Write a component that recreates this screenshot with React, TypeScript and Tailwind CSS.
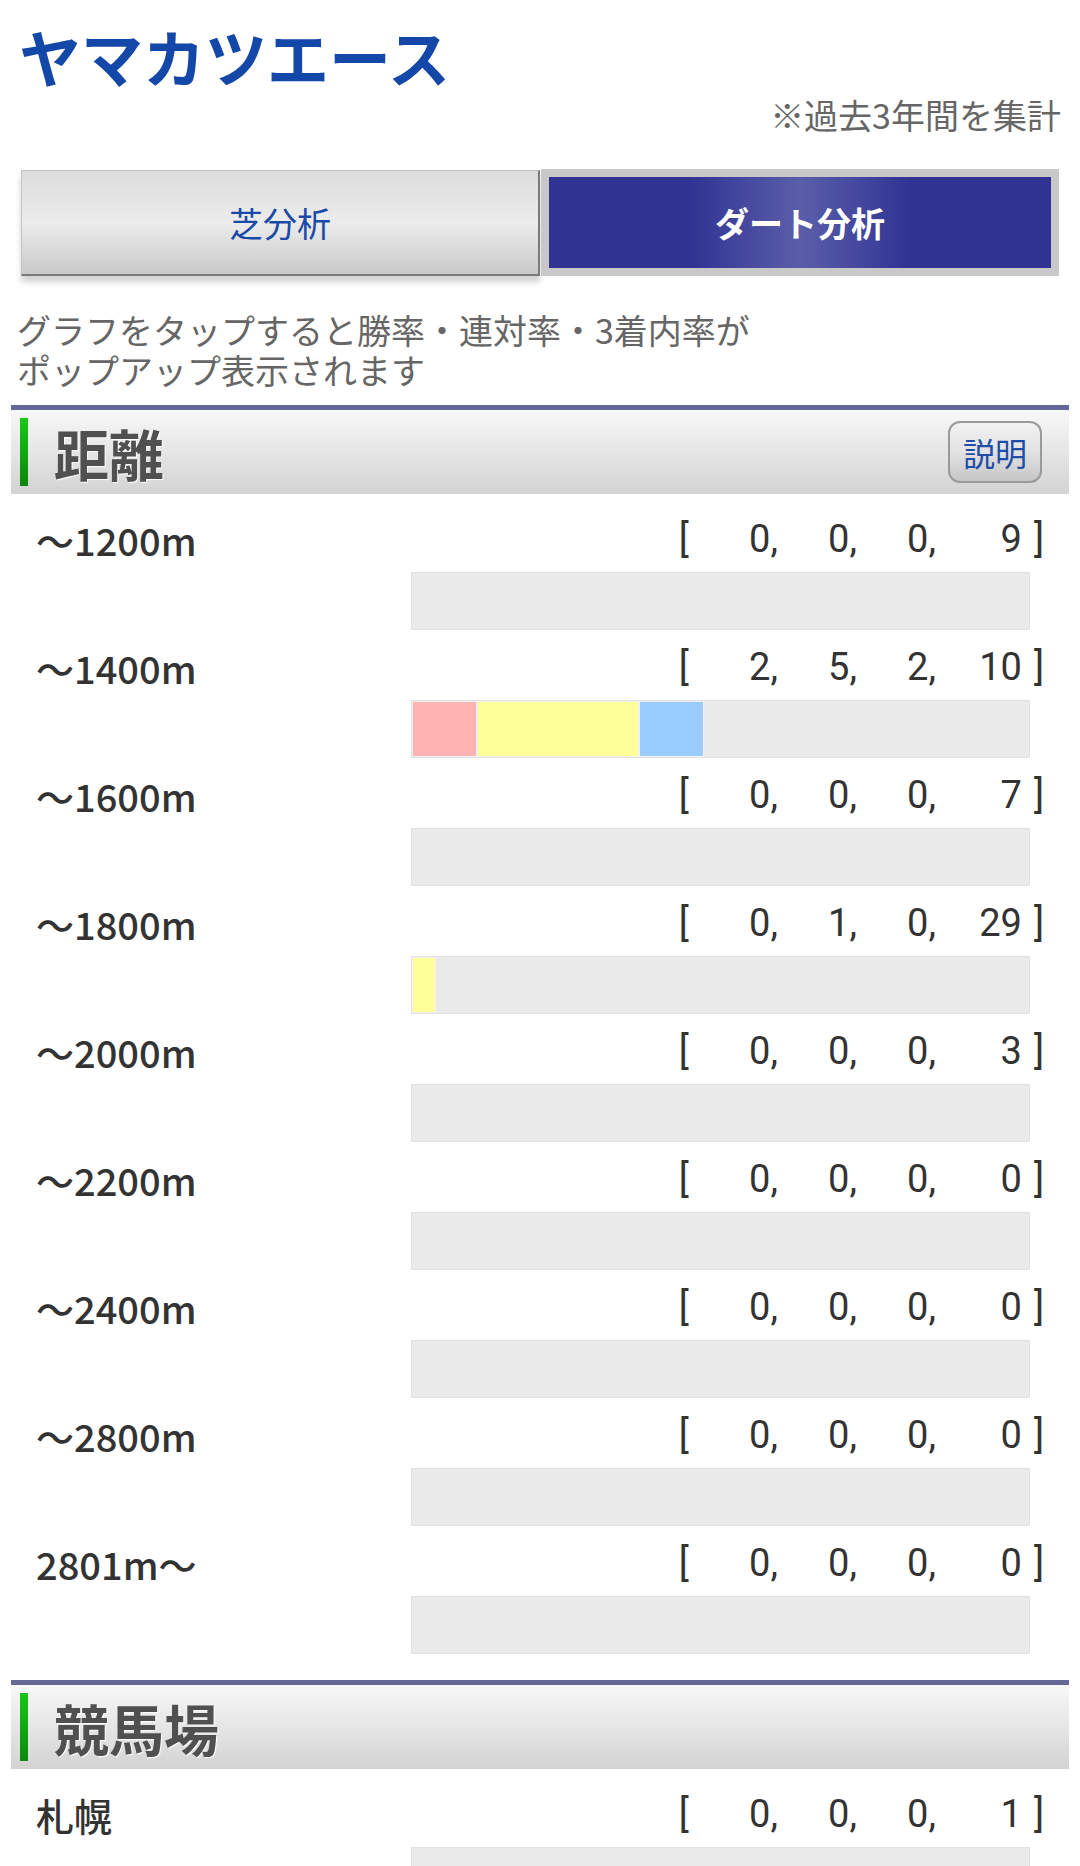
import React from 'react';

type Row = { label: string; counts: number[] };

const distanceRows: Row[] = [
    { label: '～1200m', counts: [0, 0, 0, 9] },
    { label: '～1400m', counts: [2, 5, 2, 10] },
    { label: '～1600m', counts: [0, 0, 0, 7] },
    { label: '～1800m', counts: [0, 1, 0, 29] },
    { label: '～2000m', counts: [0, 0, 0, 3] },
    { label: '～2200m', counts: [0, 0, 0, 0] },
    { label: '～2400m', counts: [0, 0, 0, 0] },
    { label: '～2800m', counts: [0, 0, 0, 0] },
    { label: '2801m～', counts: [0, 0, 0, 0] },
];

const courseRows: Row[] = [{ label: '札幌', counts: [0, 0, 0, 1] }];

const segColors = ['bg-[#ffb3b3]', 'bg-[#ffff99]', 'bg-[#99ccff]'];
const BAR_WIDTH = 617;

const SectionHeader = ({ title, help }: { title: string; help?: boolean }) => (
    <div className="mx-[11px] border-t-[5px] border-[#666699]">
        <div className="flex h-[84px] items-center bg-linear-to-b from-[#f8f8f8] to-[#d3d3d3] pl-[9px] pr-[27px]">
            <div className="h-[68px] w-[8px] bg-linear-to-b from-[#16c816] to-[#0c880c]" />
            <h2 className="ml-[26px] text-[55px] leading-none font-bold text-[#505050] [text-shadow:1px_1px_1px_#ffffff]">
                {title}
            </h2>
            {help && (
                <button className="ml-auto h-[62px] w-[94px] rounded-[12px] border-2 border-[#9a9a9a] bg-linear-to-b from-[#f2f2f2] via-[#e2e2e2] to-[#c6c6c6] text-[32px] leading-none text-[#1f4ea8]">
                    説明
                </button>
            )}
        </div>
    </div>
);

const StatRow = ({ row }: { row: Row }) => {
    const total = row.counts.reduce((a, b) => a + b, 0);
    return (
        <div className="pt-[13px]">
            <div className="flex h-[48px] items-center justify-between pl-[36px] pr-[36px] text-[38px] text-[#333]">
                <span className="font-medium">{row.label}</span>
                <div className="flex items-center font-['Roboto',sans-serif] leading-none">
                    <span>[</span>
                    <span className="w-[89px] text-right">{row.counts[0]},</span>
                    <span className="w-[79px] text-right">{row.counts[1]},</span>
                    <span className="w-[79px] text-right">{row.counts[2]},</span>
                    <span className="w-[86px] text-right">{row.counts[3]}</span>
                    <span className="ml-[12px]">]</span>
                </div>
            </div>
            <div className="mt-[9px] ml-[411px] flex h-[58px] w-[619px] border border-[#e1e1e1] bg-[#eaeaea]">
                {total > 0 &&
                    row.counts.slice(0, 3).map((n, i) =>
                        n > 0 ? (
                            <div
                                key={i}
                                className={`h-full border border-[#f1f1f1] ${segColors[i]}`}
                                style={{ width: `${Math.max((n / total) * BAR_WIDTH, 24)}px` }}
                            />
                        ) : null
                    )}
            </div>
        </div>
    );
};

export default function App() {
    return (
        <div className="w-[1080px] bg-white pb-[40px] font-['Noto_Sans_CJK_JP','Noto_Sans',sans-serif]">
            <div className="px-[19px] pt-[20px]">
                <h1 className="text-[62px] leading-[72px] font-bold text-[#1448a8]">ヤマカツエース</h1>
                <p className="mt-[3px] text-right text-[34px] leading-[40px] text-[#666]">※過去3年間を集計</p>
            </div>

            {/* tabs */}
            <div className="mx-[21px] mt-[34px] flex h-[107px] gap-[1px]">
                <div className="mt-[1px] flex w-[519px] items-center justify-center border-t border-l border-[#c4c4c4] border-r-2 border-r-[#7a7a7a] border-b-2 border-b-[#7a7a7a] bg-linear-to-b from-[#dcdcdc] via-[#ececec] to-[#c9c9c9] text-[34px] text-[#1a4aa8] shadow-[0_6px_6px_rgba(0,0,0,0.18)]">
                    芝分析
                </div>
                <div className="flex-1 bg-[#c8c8c8] p-[8px]">
                    <div className="flex h-full items-center justify-center bg-[linear-gradient(90deg,#313393_28%,#5a5ea9_50%,#313393_72%)] text-[34px] font-bold text-white">
                        ダート分析
                    </div>
                </div>
            </div>

            <div className="mt-[34px] px-[17px] text-[34px] leading-[40px] text-[#666]">
                <p>グラフをタップすると勝率・連対率・3着内率が</p>
                <p>ポップアップ表示されます</p>
            </div>

            <div className="mt-[15px]">
                <SectionHeader title="距離" help />
                <div className="pt-[8px]">
                    {distanceRows.map((r) => (
                        <StatRow key={r.label} row={r} />
                    ))}
                </div>
            </div>

            <div className="mt-[26px]">
                <SectionHeader title="競馬場" />
                <div className="pt-[8px]">
                    {courseRows.map((r) => (
                        <StatRow key={r.label} row={r} />
                    ))}
                </div>
            </div>
        </div>
    );
}
